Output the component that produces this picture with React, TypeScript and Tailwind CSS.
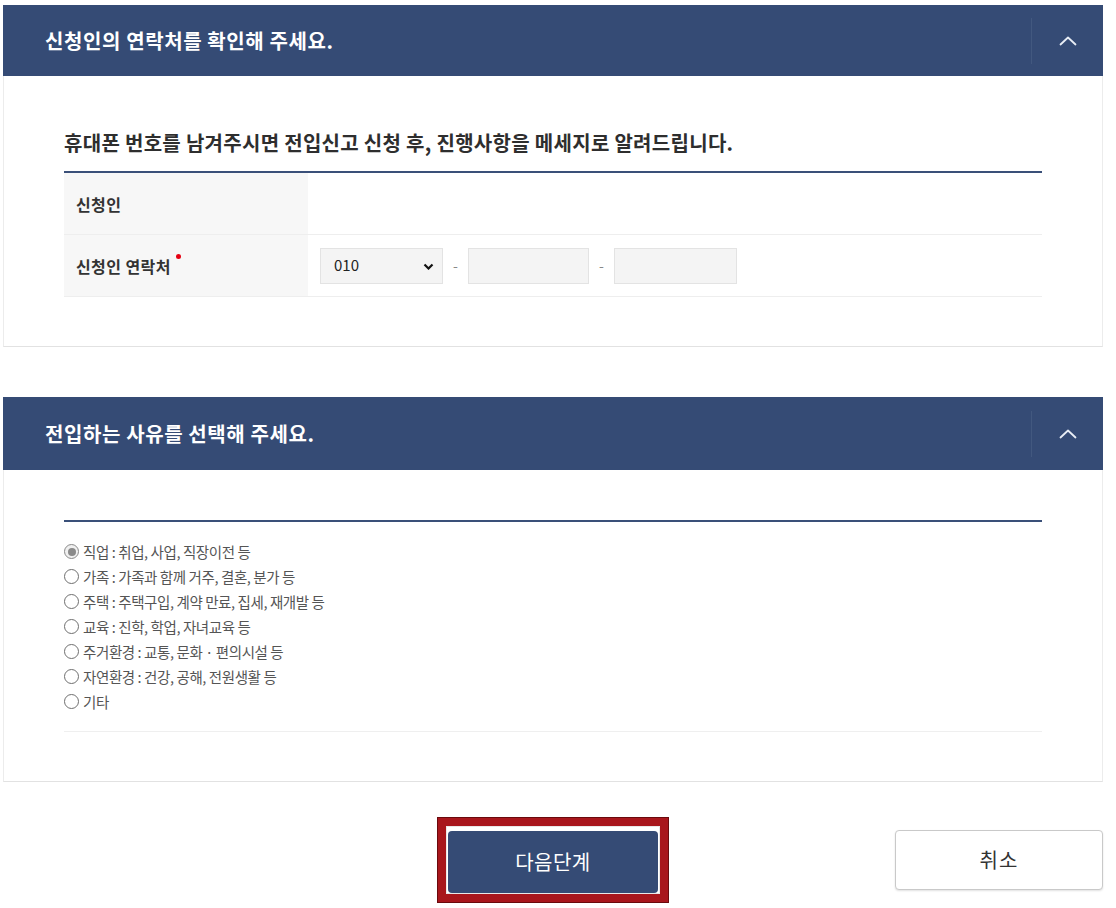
import React from "react";

const reasons = [
  "직업 : 취업, 사업, 직장이전 등",
  "가족 : 가족과 함께 거주, 결혼, 분가 등",
  "주택 : 주택구입, 계약 만료, 집세, 재개발 등",
  "교육 : 진학, 학업, 자녀교육 등",
  "주거환경 : 교통, 문화 · 편의시설 등",
  "자연환경 : 건강, 공해, 전원생활 등",
  "기타",
];

function SectionHeader({ title, height }: { title: string; height: string }) {
  return (
    <div className={`flex items-center bg-[#354b75] ${height}`}>
      <h2 className="flex-1 pl-[42px] text-[20px] font-bold tracking-[0.6px] text-white">
        {title}
      </h2>
      <div className="h-[46px] w-px bg-[#42587f]" />
      <button className="flex h-full w-[71px] items-center justify-center">
        <svg width="18" height="10" viewBox="0 0 18 10" fill="none">
          <polyline
            points="1.5,8.5 9,1.5 16.5,8.5"
            stroke="#e8edf5"
            strokeWidth="1.8"
            strokeLinecap="round"
            strokeLinejoin="round"
          />
        </svg>
      </button>
    </div>
  );
}

function Radio({ checked }: { checked?: boolean }) {
  return (
    <span
      className={`flex h-[15px] w-[15px] shrink-0 items-center justify-center rounded-full border ${
        checked ? "border-[#8a8a8a] bg-[#f0f0f0]" : "border-[#6f6f6f] bg-white"
      }`}
    >
      {checked && <span className="h-[8px] w-[8px] rounded-full bg-[#8a8a8a]" />}
    </span>
  );
}

export default function App() {
  return (
    <div className="h-[908px] w-[1116px] overflow-hidden bg-white font-['Noto_Sans_CJK_KR','Noto_Sans',sans-serif] text-[#2b2b2b]">
      <div className="ml-[3px] w-[1100px] pt-[5px]">
        {/* 연락처 */}
        <section>
          <SectionHeader title="신청인의 연락처를 확인해 주세요." height="h-[71px]" />
          <div className="border-x border-b border-x-[#ececec] border-b-[#e2e2e2] pb-[49px] pl-[60px] pt-[53px]">
            <p className="mb-[14px] text-[20px] font-bold leading-[28px] tracking-[0.3px] text-[#2e2e2e]">
              휴대폰 번호를 남겨주시면 전입신고 신청 후, 진행사항을 메세지로 알려드립니다.
            </p>
            <div className="w-[978px] border-t-2 border-[#3a5079]">
              <div className="flex h-[62px] border-b border-[#eeeeee]">
                <div className="flex w-[244px] items-center bg-[#f7f7f7] pl-[12px] text-[16px] font-bold tracking-[0.4px] text-[#333]">
                  신청인
                </div>
                <div className="flex-1" />
              </div>
              <div className="flex h-[62px] border-b border-[#eeeeee]">
                <div className="flex w-[244px] items-center bg-[#f7f7f7] pl-[12px] text-[16px] font-bold tracking-[0.4px] text-[#333]">
                  신청인 연락처
                  <span className="relative -top-[9px] ml-[5px] h-[5px] w-[5px] rounded-full bg-[#e60012]" />
                </div>
                <div className="flex flex-1 items-center pl-[12px]">
                  <div className="relative">
                    <select className="h-[36px] w-[123px] appearance-none border border-[#e3e3e3] bg-[#f4f4f4] pl-[13px] text-[15px] text-[#222] outline-none">
                      <option>010</option>
                      <option>011</option>
                      <option>016</option>
                      <option>017</option>
                    </select>
                    <svg
                      className="pointer-events-none absolute right-[9px] top-[15px]"
                      width="11"
                      height="7"
                      viewBox="0 0 11 7"
                      fill="none"
                    >
                      <polyline points="1.5,1.5 5.5,5.5 9.5,1.5" stroke="#111" strokeWidth="2.2" />
                    </svg>
                  </div>
                  <span className="w-[25px] text-center text-[14px] text-[#888]">-</span>
                  <input className="h-[36px] w-[121px] border border-[#e3e3e3] bg-[#f4f4f4] outline-none" />
                  <span className="w-[25px] text-center text-[14px] text-[#888]">-</span>
                  <input className="h-[36px] w-[123px] border border-[#e3e3e3] bg-[#f4f4f4] outline-none" />
                </div>
              </div>
            </div>
          </div>
        </section>

        {/* 전입 사유 */}
        <section className="mt-[50px]">
          <SectionHeader title="전입하는 사유를 선택해 주세요." height="h-[73px]" />
          <div className="border-x border-b border-x-[#ececec] border-b-[#e2e2e2] pb-[49px] pl-[60px] pt-[50px]">
            <div className="w-[978px] border-t-2 border-[#3a5079] pt-[17px]">
              <ul className="pb-[17px]">
                {reasons.map((r, i) => (
                  <li key={r} className="flex h-[25px] items-center gap-[4px] text-[14.5px] tracking-[-0.4px] text-[#555]">
                    <Radio checked={i === 0} />
                    <span>{r}</span>
                  </li>
                ))}
              </ul>
              <div className="border-b border-[#efefef]" />
            </div>
          </div>
        </section>

        {/* 버튼 */}
        <div className="mt-[36px] grid grid-cols-3 items-center">
          <div />
          <div className="justify-self-center border-[8px] border-[#a8161c] px-[2px] pb-[1px] pt-[5px] shadow-[inset_0_0_0_1px_#e8e8e8,0_0_0_1px_#6a0a0d]">
            <button className="h-[62px] w-[210px] rounded-[4px] bg-[#354b75] text-[20px] tracking-[0.5px] text-white">
              다음단계
            </button>
          </div>
          <button className="h-[60px] w-[208px] justify-self-end rounded-[4px] border border-[#c9c9c9] bg-white text-[20px] tracking-[1px] text-[#333] shadow-[0_1px_2px_rgba(0,0,0,0.12)]">
            취소
          </button>
        </div>
      </div>
    </div>
  );
}
